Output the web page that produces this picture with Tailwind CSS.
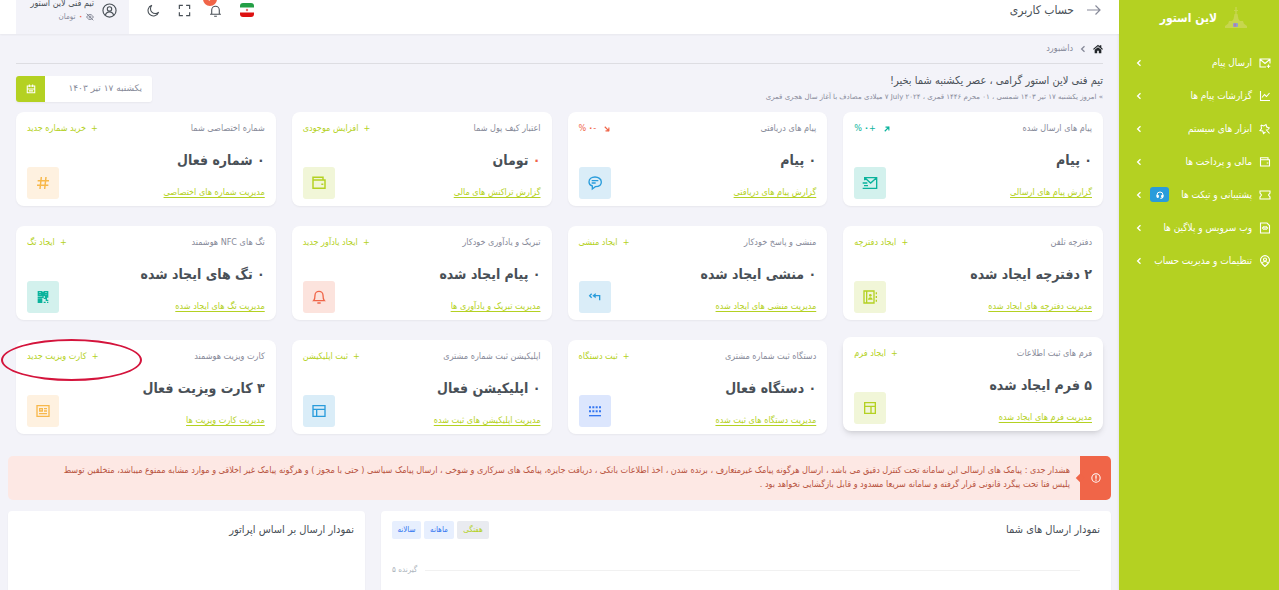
<!DOCTYPE html>
<html lang="fa" dir="rtl">
<head>
<meta charset="utf-8">
<meta name="viewport" content="width=device-width, initial-scale=1">
<title>حساب کاربری</title>
<script src="https://cdn.jsdelivr.net/npm/@tailwindcss/browser@4"></script>
</head>
<body class="flex h-screen overflow-hidden bg-[#f3f3f9] font-['DejaVu_Sans_Condensed','DejaVu_Sans',sans-serif] text-[9px] text-[#878a99]">

<svg class="hidden">
  <symbol id="chev" viewBox="0 0 8 8"><path d="M5.5 1.2 2.6 4l2.9 2.8" fill="none" stroke="currentColor" stroke-width="1.3"/></symbol>
  <symbol id="wallet" viewBox="0 0 24 24"><path d="M18 7V3.500H3V20h18V7.500H3M15.500 14h3" fill="none" stroke="currentColor" stroke-width="2.200"/></symbol>
</svg>

<aside class="w-40 shrink-0 bg-[#b4d122] text-white shadow-sm">
  <a href="#" class="flex h-9 items-center gap-2 pr-8">
    <svg class="size-[22px]" viewBox="0 0 22 22"><g fill="#cdd75e"><path d="M10.300 0h1.400v7h-1.400zM9 3h4v1H9zM9.500 7h3l1 5 2 3h-9l2-3zM4 14h14l1 3H3zM0 19l4-3h14l4 3v2H0z" opacity=".75"/></g><rect x="8" y="16" width="5" height="4" rx="1" fill="#8f9fd0"/><path d="M10 16.500v3" stroke="#e0607d" stroke-width="1"/></svg>
    <span class="text-[12px] font-bold">لاین استور</span>
  </a>
  <nav class="mt-[10px] flex flex-col pr-2 pl-4 text-[10px] whitespace-nowrap">
    <a href="#" class="flex h-[33px] items-center gap-[7px]">
      <svg class="size-3" viewBox="0 0 24 24" fill="none" stroke="currentColor" stroke-width="2.200"><path d="M22 13V4H2v16h12M2.500 5l9.500 8 9.500-8M19 15v7M15.500 18.500h7"/></svg>
      <span class="grow">ارسال پیام</span><svg class="size-2"><use href="#chev"/></svg></a>
    <a href="#" class="flex h-[33px] items-center gap-[7px]">
      <svg class="size-3" viewBox="0 0 24 24" fill="none" stroke="currentColor" stroke-width="2.200"><path d="M3 2v19h19M6 15l5-6 4 4 6-7"/></svg>
      <span class="grow">گزارشات پیام ها</span><svg class="size-2"><use href="#chev"/></svg></a>
    <a href="#" class="flex h-[33px] items-center gap-[7px]">
      <svg class="size-3" viewBox="0 0 24 24" fill="none" stroke="currentColor" stroke-width="2.200"><path d="M4 4l5.500 2L14 3l1.500 5 5 2-3.500 4M4 4l1 7-3 4 5.500 1L9 21l4-3M14 13l7 8"/></svg>
      <span class="grow">ابزار های سیستم</span><svg class="size-2"><use href="#chev"/></svg></a>
    <a href="#" class="flex h-[33px] items-center gap-[7px]">
      <svg class="size-3"><use href="#wallet"/></svg>
      <span class="grow">مالی و پرداخت ها</span><svg class="size-2"><use href="#chev"/></svg></a>
    <a href="#" class="flex h-[33px] items-center gap-[7px]">
      <svg class="size-3 shrink-0" viewBox="0 0 24 24" fill="none" stroke="currentColor" stroke-width="2.200"><path d="M2 4h20v4l-3 4 3 4v4H2v-4l3-4-3-4z"/></svg>
      <span class="grow">پشتیبانی و تیکت ها</span>
      <span class="flex h-[15px] w-[19px] shrink-0 items-center justify-center rounded-[3px] bg-[#299cdb]"><svg class="size-2" viewBox="0 0 24 24" fill="none" stroke="currentColor" stroke-width="3"><path d="M3 16v-4a9 9 0 0 1 18 0v4M13 22h4l4-3"/><path d="M3 13h4v6H3zM17 13h4v6h-4z" fill="currentColor"/></svg></span>
      <svg class="size-2 shrink-0"><use href="#chev"/></svg></a>
    <a href="#" class="flex h-[33px] items-center gap-[7px]">
      <svg class="size-3" viewBox="0 0 24 24" fill="none" stroke="currentColor" stroke-width="2.200"><path d="M3 2h13l5 5v15H3zM10 9l-3 3 3 3M14 9l3 3-3 3M12 8v8"/></svg>
      <span class="grow">وب سرویس و پلاگین ها</span><svg class="size-2"><use href="#chev"/></svg></a>
    <a href="#" class="flex h-[33px] items-center gap-[7px]">
      <svg class="size-3" viewBox="0 0 24 24" fill="none" stroke="currentColor" stroke-width="2.200"><path d="M12 23l-6-6a9 9 0 1 1 12 0z"/><circle cx="12" cy="9" r="3"/><path d="M6.500 16c2-4 9-4 11 0"/></svg>
      <span class="grow">تنظیمات و مدیریت حساب</span><svg class="size-2"><use href="#chev"/></svg></a>
  </nav>
</aside>

<main class="flex min-w-0 grow flex-col">
  <header class="flex h-[34px] shrink-0 items-stretch justify-between bg-white px-4 text-[#495057] shadow-xs">
    <div class="flex items-center gap-3 pb-[14px]">
      <button type="button" aria-label="منو" class="mr-0.5"><svg class="h-3 w-[15px] text-[#878a99]" viewBox="0 0 15 12" fill="none" stroke="currentColor" stroke-width="1.200"><path d="M1 6h13M9.500 1.500 14 6l-4.500 4.500"/></svg></button>
      <h1 class="text-[12px]">حساب کاربری</h1>
    </div>
    <div class="flex items-stretch gap-[18px]">
      <div class="flex items-center gap-[18px] pb-[14px]">
        <button type="button" aria-label="زبان"><svg class="size-3.5" viewBox="0 0 14 14"><rect width="14" height="14" rx="3" fill="#fff"/><path d="M0 4.500V3a3 3 0 0 1 3-3h8a3 3 0 0 1 3 3v1.500z" fill="#249f46"/><path d="M0 9.500V11a3 3 0 0 0 3 3h8a3 3 0 0 0 3-3V9.500z" fill="#dd1111"/><circle cx="7" cy="7" r="1.200" fill="#e57373"/></svg></button>
        <button type="button" aria-label="اعلان ها" class="relative"><svg class="size-[13px]" viewBox="0 0 24 24" fill="none" stroke="currentColor" stroke-width="2"><path d="M2 19h20M5 19v-8a7 7 0 0 1 14 0v8M9.500 22.500h5"/></svg><span class="absolute -top-3 right-[5px] flex size-3.5 items-center justify-center rounded-full bg-[#f06548] text-[8px] text-white">۲</span></button>
        <button type="button" aria-label="تمام صفحه"><svg class="size-[13px]" viewBox="0 0 24 24" fill="none" stroke="currentColor" stroke-width="2.200"><path d="M2.500 9V2.500H9M15 2.500h6.500V9M21.500 15v6.500H15M9 21.500H2.500V15"/></svg></button>
        <button type="button" aria-label="حالت شب"><svg class="size-[13px]" viewBox="0 0 24 24" fill="none" stroke="currentColor" stroke-width="2"><path d="M9 2.500A8.500 8.500 0 0 0 21.500 15 10 10 0 1 1 9 2.500z"/></svg></button>
      </div>
      <button type="button" class="flex w-[113px] items-center gap-2 bg-[#f3f3f9] pr-3 pb-[14px]">
        <svg class="size-[15px] shrink-0" viewBox="0 0 24 24" fill="none" stroke="currentColor" stroke-width="1.800"><circle cx="12" cy="12" r="10.500"/><circle cx="12" cy="9.500" r="3.500"/><path d="M5.500 19.500c2-7 11-7 13 0"/></svg>
        <span class="flex flex-col items-start leading-[13px] whitespace-nowrap">
          <span>تیم فنی لاین استور</span>
          <span class="flex items-center gap-[3px] text-[8px] text-[#878a99]"><svg class="size-2" viewBox="0 0 24 24" fill="none" stroke="currentColor" stroke-width="3"><path d="M2 12c5-10 15-10 20 0-5 10-15 10-20 0zM2 2l20 20"/><circle cx="12" cy="12" r="3"/></svg><span class="font-bold text-[#f06548]">۰</span><span>تومان</span></span>
        </span>
      </button>
    </div>
  </header>

  <div class="px-4">
    <nav aria-label="مسیر" class="flex h-[30px] items-center gap-1.5 border-b border-[#dddde2]">
      <a href="#" aria-label="خانه"><svg class="size-2.5 text-[#212529]" viewBox="0 0 24 24" fill="currentColor"><path d="M12 2 0 12l2 2 10-8.500L22 14l2-2-4-3.500V3h-4v2.500zM12 7.500 4 14v8h6v-6h4v6h6v-8z"/></svg></a>
      <svg class="size-2"><use href="#chev"/></svg>
      <span>داشبورد</span>
    </nav>
    <div class="flex items-center justify-between pt-2 pb-2">
      <div>
        <h2 class="text-[11px] leading-[18px] text-[#495057]">تیم فنی لاین استور گرامی ، عصر یکشنبه شما بخیر!</h2>
        <p class="font-['DejaVu_Sans',sans-serif] text-[7px] leading-[14px]">» امروز یکشنبه ۱۷ تیر ۱۴۰۳ شمسی ، ۰۱ محرم ۱۴۴۶ قمری ، <bdi dir="ltr">۷ July ۲۰۲۴</bdi> میلادی مصادف با آغاز سال هجری قمری</p>
      </div>
      <div class="mt-0.5 flex h-[26px] w-[136px] rounded-[3px] shadow-xs">
        <input type="text" aria-label="تاریخ" value="یکشنبه ۱۷ تیر ۱۴۰۳" class="min-w-0 grow rounded-r-[3px] bg-white pr-2.5 font-['DejaVu_Sans',sans-serif]">
        <button type="button" aria-label="تقویم" class="flex w-[29px] shrink-0 items-center justify-center rounded-l-[3px] bg-[#b4d122] text-white"><svg class="size-2.5" viewBox="0 0 24 24" fill="none" stroke="currentColor" stroke-width="2.500"><path d="M3 5h18v16H3zM3 12h18M8 1v6M16 1v6M7 16.500h10"/></svg></button>
      </div>
    </div>

    <div class="grid grid-cols-4 gap-x-4 gap-y-5">
      <section class="rounded-lg bg-white px-[11px] pt-[9px] pb-1.5 shadow-xs">
        <div class="flex h-4 items-center justify-between"><p>پیام های ارسال شده</p><p class="flex items-center text-[#0ab39c]"><svg class="ml-2 size-1.5" viewBox="0 0 8 8" fill="none" stroke="currentColor" stroke-width="1.500"><path d="M1 7l6-6M2 1.500h4.500V6"/></svg><span>+</span><span class="font-bold">۰</span><span class="mr-0.5">%</span></p></div>
        <div class="mt-[7px] flex items-end justify-between"><div><h3 class="text-[14px] leading-8 font-bold text-[#495057]">۰ پیام</h3><a href="#" class="mt-2 block leading-4 text-[#b4d122] underline underline-offset-2">گزارش پیام های ارسالی</a></div>
        <span class="mb-px flex size-8 items-center justify-center rounded-[3px] bg-[#d3f1ed] text-[#0ab39c]"><svg class="size-4" viewBox="0 0 24 24" fill="none" stroke="currentColor" stroke-width="2"><path d="M4 8V4h18v16H8M4.500 4.500 13 12l8.500-7.500M1 12h7M3 16h6M1 20h8"/></svg></span></div>
      </section>
      <section class="rounded-lg bg-white px-[11px] pt-[9px] pb-1.5 shadow-xs">
        <div class="flex h-4 items-center justify-between"><p>پیام های دریافتی</p><p class="flex items-center text-[#f06548]"><svg class="ml-2 size-1.5" viewBox="0 0 8 8" fill="none" stroke="currentColor" stroke-width="1.500"><path d="M1 1l6 6M6.500 2v4.500H2"/></svg><span>-</span><span class="font-bold">۰</span><span class="mr-0.5">%</span></p></div>
        <div class="mt-[7px] flex items-end justify-between"><div><h3 class="text-[14px] leading-8 font-bold text-[#495057]">۰ پیام</h3><a href="#" class="mt-2 block leading-4 text-[#b4d122] underline underline-offset-2">گزارش پیام های دریافتی</a></div>
        <span class="mb-px flex size-8 items-center justify-center rounded-[3px] bg-[#daedf8] text-[#299cdb]"><svg class="size-4" viewBox="0 0 24 24" fill="none" stroke="currentColor" stroke-width="2"><path d="M8 21v-4.500C4.500 15.500 3 13 3 10.500c0-4.500 4-7.500 9-7.500s9.500 3 9.500 7.500-4 7-9 7zM7 8.500h10M7 12h6"/></svg></span></div>
      </section>
      <section class="rounded-lg bg-white px-[11px] pt-[9px] pb-1.5 shadow-xs">
        <div class="flex h-4 items-center justify-between"><p>اعتبار کیف پول شما</p><a href="#" class="text-[#b4d122]">+ &nbsp;افزایش موجودی</a></div>
        <div class="mt-[7px] flex items-end justify-between"><div><h3 class="text-[14px] leading-8 font-bold text-[#495057]"><span class="text-[#f06548]">۰</span> تومان</h3><a href="#" class="mt-2 block leading-4 text-[#b4d122] underline underline-offset-2">گزارش تراکنش های مالی</a></div>
        <span class="mb-px flex size-8 items-center justify-center rounded-[3px] bg-[#f1f6d8] text-[#b4d122]"><svg class="size-4"><use href="#wallet"/></svg></span></div>
      </section>
      <section class="rounded-lg bg-white px-[11px] pt-[9px] pb-1.5 shadow-xs">
        <div class="flex h-4 items-center justify-between"><p>شماره اختصاصی شما</p><a href="#" class="text-[#b4d122]">+ &nbsp;خرید شماره جدید</a></div>
        <div class="mt-[7px] flex items-end justify-between"><div><h3 class="text-[14px] leading-8 font-bold text-[#495057]">۰ شماره فعال</h3><a href="#" class="mt-2 block leading-4 text-[#b4d122] underline underline-offset-2">مدیریت شماره های اختصاصی</a></div>
        <span class="mb-px flex size-8 items-center justify-center rounded-[3px] bg-[#fef1e0] text-[#f7b84b]"><svg class="size-4" viewBox="0 0 24 24" fill="none" stroke="currentColor" stroke-width="2.200"><path d="M9.500 3l-2 18M16.500 3l-2 18M4 8.500h17M3 15.500h17"/></svg></span></div>
      </section>

      <section class="rounded-lg bg-white px-[11px] pt-[9px] pb-1.5 shadow-xs">
        <div class="flex h-4 items-center justify-between"><p>دفترچه تلفن</p><a href="#" class="text-[#b4d122]">+ &nbsp;ایجاد دفترچه</a></div>
        <div class="mt-[7px] flex items-end justify-between"><div><h3 class="text-[14px] leading-8 font-bold text-[#495057]">۲ دفترچه ایجاد شده</h3><a href="#" class="mt-2 block leading-4 text-[#b4d122] underline underline-offset-2">مدیریت دفترچه های ایجاد شده</a></div>
        <span class="mb-px flex size-8 items-center justify-center rounded-[3px] bg-[#f1f6d8] text-[#b4d122]"><svg class="size-4" viewBox="0 0 24 24" fill="none" stroke="currentColor" stroke-width="2"><path d="M3 3h15v18H3zM7 3v18M21.500 5v3M21.500 10.500v3M21.500 16v3"/><circle cx="12.500" cy="9.500" r="2" fill="currentColor" stroke="none"/><path d="M9 16c0-5 7-5 7 0z" fill="currentColor" stroke="none"/></svg></span></div>
      </section>
      <section class="rounded-lg bg-white px-[11px] pt-[9px] pb-1.5 shadow-xs">
        <div class="flex h-4 items-center justify-between"><p>منشی و پاسخ خودکار</p><a href="#" class="text-[#b4d122]">+ &nbsp;ایجاد منشی</a></div>
        <div class="mt-[7px] flex items-end justify-between"><div><h3 class="text-[14px] leading-8 font-bold text-[#495057]">۰ منشی ایجاد شده</h3><a href="#" class="mt-2 block leading-4 text-[#b4d122] underline underline-offset-2">مدیریت منشی های ایجاد شده</a></div>
        <span class="mb-px flex size-8 items-center justify-center rounded-[3px] bg-[#daedf8] text-[#299cdb]"><svg class="size-4" viewBox="0 0 24 24" fill="none" stroke="currentColor" stroke-width="2"><path d="M12 10h7v7M7 7l-3 3 3 3"/><path d="M13 6v8l-5-4z" fill="currentColor" stroke="none"/></svg></span></div>
      </section>
      <section class="rounded-lg bg-white px-[11px] pt-[9px] pb-1.5 shadow-xs">
        <div class="flex h-4 items-center justify-between"><p>تبریک و یادآوری خودکار</p><a href="#" class="text-[#b4d122]">+ &nbsp;ایجاد یادآور جدید</a></div>
        <div class="mt-[7px] flex items-end justify-between"><div><h3 class="text-[14px] leading-8 font-bold text-[#495057]">۰ پیام ایجاد شده</h3><a href="#" class="mt-2 block leading-4 text-[#b4d122] underline underline-offset-2">مدیریت تبریک و یادآوری ها</a></div>
        <span class="mb-px flex size-8 items-center justify-center rounded-[3px] bg-[#fce3dd] text-[#f06548]"><svg class="size-4" viewBox="0 0 24 24" fill="none" stroke="currentColor" stroke-width="2"><path d="M4 17.500h16c-1.500-1.500-2-3-2-8a6 6 0 0 0-12 0c0 5-.5 6.500-2 8zM9.500 21h5"/></svg></span></div>
      </section>
      <section class="rounded-lg bg-white px-[11px] pt-[9px] pb-1.5 shadow-xs">
        <div class="flex h-4 items-center justify-between"><p>تگ های NFC هوشمند</p><a href="#" class="text-[#b4d122]">+ &nbsp;ایجاد تگ</a></div>
        <div class="mt-[7px] flex items-end justify-between"><div><h3 class="text-[14px] leading-8 font-bold text-[#495057]">۰ تگ های ایجاد شده</h3><a href="#" class="mt-2 block leading-4 text-[#b4d122] underline underline-offset-2">مدیریت تگ های ایجاد شده</a></div>
        <span class="mb-px flex size-8 items-center justify-center rounded-[3px] bg-[#d3f1ed] text-[#0ab39c]"><svg class="size-4" viewBox="0 0 24 24" fill="none" stroke="currentColor" stroke-width="2"><path d="M5 4h5v6H5zM14 4h5v6h-5zM5 15h5v5H5zM12 4v8M13 14h4v3h3M13 20h3M19 19v2M7 6.500h1v1H7zM16 6.500h1v1h-1zM7 17h1v1H7zM4 12.500h9M15 12h5"/></svg></span></div>
      </section>

      <section class="-translate-y-[3px] rounded-lg bg-white px-[11px] pt-[9px] pb-1.5 shadow-md">
        <div class="flex h-4 items-center justify-between"><p>فرم های ثبت اطلاعات</p><a href="#" class="text-[#b4d122]">+ &nbsp;ایجاد فرم</a></div>
        <div class="mt-[7px] flex items-end justify-between"><div><h3 class="text-[14px] leading-8 font-bold text-[#495057]">۵ فرم ایجاد شده</h3><a href="#" class="mt-2 block leading-4 text-[#b4d122] underline underline-offset-2">مدیریت فرم های ایجاد شده</a></div>
        <span class="mb-px flex size-8 items-center justify-center rounded-[3px] bg-[#f1f6d8] text-[#b4d122]"><svg class="size-4" viewBox="0 0 24 24" fill="none" stroke="currentColor" stroke-width="2"><path d="M4 4h16v16H4zM4 9.500h16M13.500 9.500V20"/></svg></span></div>
      </section>
      <section class="rounded-lg bg-white px-[11px] pt-[9px] pb-1.5 shadow-xs">
        <div class="flex h-4 items-center justify-between"><p>دستگاه ثبت شماره مشتری</p><a href="#" class="text-[#b4d122]">+ &nbsp;ثبت دستگاه</a></div>
        <div class="mt-[7px] flex items-end justify-between"><div><h3 class="text-[14px] leading-8 font-bold text-[#495057]">۰ دستگاه فعال</h3><a href="#" class="mt-2 block leading-4 text-[#b4d122] underline underline-offset-2">مدیریت دستگاه های ثبت شده</a></div>
        <span class="mb-px flex size-8 items-center justify-center rounded-[3px] bg-[#dce6fd] text-[#3577f1]"><svg class="size-4" viewBox="0 0 24 24" fill="none" stroke="currentColor" stroke-width="3"><path d="M3 6.500h18M3 12.500h18" stroke-dasharray="3 2"/><path d="M3 19h18" stroke-width="2"/></svg></span></div>
      </section>
      <section class="rounded-lg bg-white px-[11px] pt-[9px] pb-1.5 shadow-xs">
        <div class="flex h-4 items-center justify-between"><p>اپلیکیشن ثبت شماره مشتری</p><a href="#" class="text-[#b4d122]">+ &nbsp;ثبت اپلیکیشن</a></div>
        <div class="mt-[7px] flex items-end justify-between"><div><h3 class="text-[14px] leading-8 font-bold text-[#495057]">۰ اپلیکیشن فعال</h3><a href="#" class="mt-2 block leading-4 text-[#b4d122] underline underline-offset-2">مدیریت اپلیکیشن های ثبت شده</a></div>
        <span class="mb-px flex size-8 items-center justify-center rounded-[3px] bg-[#daedf8] text-[#299cdb]"><svg class="size-4" viewBox="0 0 24 24" fill="none" stroke="currentColor" stroke-width="2"><path d="M3 4h18v16H3zM3 9.500h18M8.500 9.500V20"/></svg></span></div>
      </section>
      <section class="relative rounded-lg bg-white px-[11px] pt-[9px] pb-1.5 shadow-xs">
        <span class="absolute -top-px -left-[15px] h-[42px] w-[141px] rounded-[50%] border-2 border-[#d4143c]"></span>
        <div class="flex h-4 items-center justify-between"><p>کارت ویزیت هوشمند</p><a href="#" class="text-[#b4d122]">+ &nbsp;کارت ویزیت جدید</a></div>
        <div class="mt-[7px] flex items-end justify-between"><div><h3 class="text-[14px] leading-8 font-bold text-[#495057]">۳ کارت ویزیت فعال</h3><a href="#" class="mt-2 block leading-4 text-[#b4d122] underline underline-offset-2">مدیریت کارت ویزیت ها</a></div>
        <span class="mb-px flex size-8 items-center justify-center rounded-[3px] bg-[#fef1e0] text-[#f7b84b]"><svg class="size-4" viewBox="0 0 24 24" fill="none" stroke="currentColor" stroke-width="2"><path d="M3 4h18v16H3zM7 8.500h4v3.500H7zM13.500 8.500H18M13.500 12H18M6 16h12"/></svg></span></div>
      </section>
    </div>
  </div>

  <div class="flex min-h-0 grow flex-col px-2">
    <div role="alert" class="mt-[22px] flex shrink-0 overflow-hidden rounded-[5px] bg-[#fde8e4] text-[#b8543f]">
      <div class="relative flex w-[31px] shrink-0 items-center justify-center bg-[#f06548] text-white">
        <svg class="size-2.5" viewBox="0 0 24 24" fill="none" stroke="currentColor" stroke-width="2.500"><circle cx="12" cy="12" r="10"/><path d="M12 5.500v8M12 15.500v3" stroke-width="3"/></svg>
        <span class="absolute top-1/2 -left-[3px] size-1.5 -translate-y-1/2 rotate-45 bg-[#f06548]"></span>
      </div>
      <p class="grow pt-[7px] pr-2.5 pb-[9px] pl-3 leading-[14px]">هشدار جدی : پیامک های ارسالی این سامانه تحت کنترل دقیق می باشد ، ارسال هرگونه پیامک غیرمتعارف ، برنده شدن ، اخذ اطلاعات بانکی ، دریافت جایزه، پیامک های سرکاری و شوخی ، ارسال پیامک سیاسی ( حتی با مجوز ) و هرگونه پیامک غیر اخلاقی و موارد مشابه ممنوع میباشد، متخلفین توسط<br>پلیس فتا تحت پیگرد قانونی قرار گرفته و سامانه سریعا مسدود و قابل بازگشایی نخواهد بود .</p>
    </div>
    <div class="mt-[11px] flex min-h-0 grow gap-4">
      <section class="min-w-0 grow rounded-t-[4px] bg-white px-[11px] pt-[10px] shadow-xs">
        <div class="flex h-[18px] items-center justify-between">
          <h2 class="text-[11px] text-[#495057]">نمودار ارسال های شما</h2>
          <div class="flex gap-[3px] text-[8px]">
            <button type="button" class="h-[18px] w-8 rounded-[2px] bg-[#e9ebf0] text-[#b4d122]">هفتگی</button>
            <button type="button" class="h-[18px] w-[30px] rounded-[2px] bg-[#e7effe] text-[#3577f1]">ماهانه</button>
            <button type="button" class="h-[18px] w-[29px] rounded-[2px] bg-[#e7effe] text-[#3577f1]">سالانه</button>
          </div>
        </div>
        <div class="mt-[23px] flex items-center gap-2 pr-5 text-[8px] leading-4 text-[#adb5bd]"><span class="h-px grow bg-[#f1f1f1]"></span><span>گیرنده ۵</span></div>
      </section>
      <section class="w-[357px] shrink-0 rounded-t-[4px] bg-white px-[11px] pt-[10px] shadow-xs">
        <h2 class="text-[11px] leading-[18px] text-[#495057]">نمودار ارسال بر اساس اپراتور</h2>
      </section>
    </div>
  </div>
</main>
</body>
</html>
